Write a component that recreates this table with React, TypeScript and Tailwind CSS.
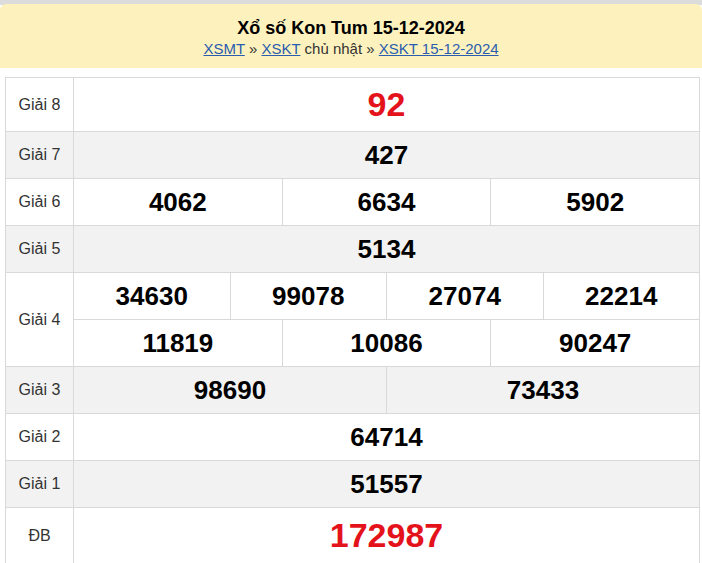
import React from 'react';

type Row = { label: string; nums: string[][]; big?: boolean; gray?: boolean; h: number };

const rows: Row[] = [
  { label: 'Giải 8', nums: [['92']], big: true, h: 54 },
  { label: 'Giải 7', nums: [['427']], gray: true, h: 47 },
  { label: 'Giải 6', nums: [['4062', '6634', '5902']], h: 47 },
  { label: 'Giải 5', nums: [['5134']], gray: true, h: 47 },
  { label: 'Giải 4', nums: [['34630', '99078', '27074', '22214'], ['11819', '10086', '90247']], h: 47 },
  { label: 'Giải 3', nums: [['98690', '73433']], gray: true, h: 47 },
  { label: 'Giải 2', nums: [['64714']], h: 47 },
  { label: 'Giải 1', nums: [['51557']], gray: true, h: 47 },
  { label: 'ĐB', nums: [['172987']], big: true, h: 56 },
];

const App: React.FC = () => {
  return (
    <div className="w-[702px] h-[563px] overflow-hidden bg-white font-['Liberation_Sans',Arial,sans-serif]">
      <div className="h-[5px] bg-[#dcdcdc]" />
      {/* Header */}
      <div className="h-[64px] bg-[#fdf2bd] rounded-t-[6px] -mt-[1px] flex flex-col items-center pt-[13px]">
        <h1 className="text-[18px] leading-[22px] font-bold text-black">Xổ số Kon Tum 15-12-2024</h1>
        <div className="text-[15px] leading-[20px] text-[#333]">
          <a href="#" className="text-[#2a5db0] underline">XSMT</a> »{' '}
          <a href="#" className="text-[#2a5db0] underline">XSKT</a> chủ nhật »{' '}
          <a href="#" className="text-[#2a5db0] underline">XSKT 15-12-2024</a>
        </div>
      </div>

      {/* Results table */}
      <table className="ml-[5px] mt-[9px] w-[695px] border-collapse table-fixed">
        <colgroup>
          <col className="w-[68px]" />
          <col />
        </colgroup>
        <tbody>
          {rows.map((r) =>
            r.nums.map((line, i) => (
              <tr key={r.label + i} className={r.gray ? 'bg-[#f2f2f2]' : 'bg-white'}>
                {i === 0 && (
                  <td
                    rowSpan={r.nums.length}
                    className="border border-[#d9d9d9] text-center text-[16px] text-[#333] p-0"
                  >
                    {r.label}
                  </td>
                )}
                <td className="border border-[#d9d9d9] p-0" style={{ height: r.h }}>
                  <div className="flex h-full">
                    {line.map((n, j) => (
                      <div
                        key={n}
                        className={`flex-1 flex items-center justify-center font-bold ${
                          j > 0 ? 'border-l border-[#d9d9d9]' : ''
                        } ${r.big ? 'text-[34px] text-[#e4131b]' : 'text-[26px] text-black'}`}
                      >
                        {n}
                      </div>
                    ))}
                  </div>
                </td>
              </tr>
            ))
          )}
        </tbody>
      </table>
    </div>
  );
};

export default App;
